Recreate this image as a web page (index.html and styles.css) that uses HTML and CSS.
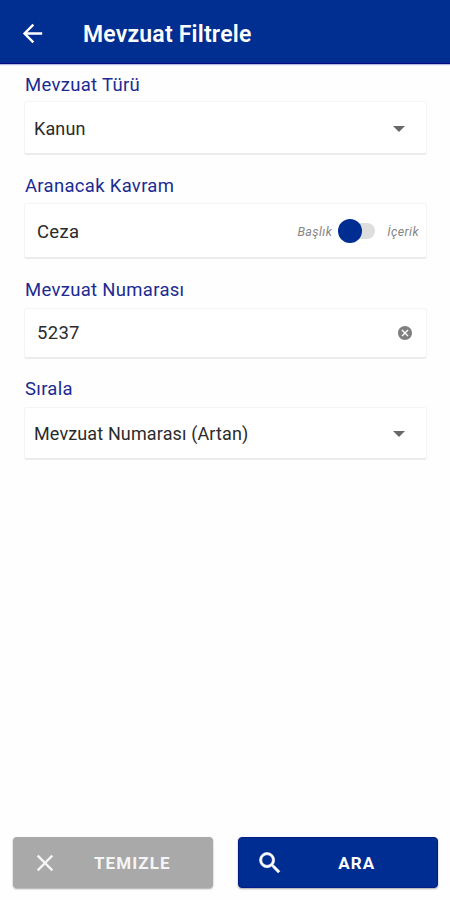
FILE: index.html
```html
<!DOCTYPE html>
<html lang="tr">
<head>
<meta charset="utf-8">
<title>Mevzuat Filtrele</title>
<link rel="stylesheet" href="styles.css">
</head>
<body>
<div class="screen">
  <header class="appbar">
    <svg class="back" viewBox="0 0 24 24"><path d="M20 11H7.83l5.59-5.59L12 4l-8 8 8 8 1.41-1.41L7.83 13H20v-2z"/></svg>
    <h1 class="title">Mevzuat Filtrele</h1>
  </header>
  <main class="form">
    <label class="label label-type">Mevzuat Türü</label>
    <div class="card card-type">
      <span class="value value-select">Kanun</span>
      <svg class="caret" viewBox="0 0 12 6"><path d="M0 0h12L6 6z"/></svg>
    </div>
    <label class="label label-term">Aranacak Kavram</label>
    <div class="card card-term">
      <span class="value value-term">Ceza</span>
      <span class="option">Başlık</span>
      <span class="switch"><span class="thumb"></span></span>
      <span class="option">İçerik</span>
    </div>
    <label class="label label-number">Mevzuat Numarası</label>
    <div class="card card-number">
      <span class="value">5237</span>
      <svg class="clear" viewBox="2 2 20 20"><path d="M12 2C6.47 2 2 6.47 2 12s4.47 10 10 10 10-4.47 10-10S17.53 2 12 2zm5 13.59L15.59 17 12 13.41 8.41 17 7 15.59 10.59 12 7 8.41 8.41 7 12 10.59 15.59 7 17 8.41 13.41 12 17 15.59z"/></svg>
    </div>
    <label class="label label-sort">Sırala</label>
    <div class="card card-sort">
      <span class="value value-select">Mevzuat Numarası (Artan)</span>
      <svg class="caret" viewBox="0 0 12 6"><path d="M0 0h12L6 6z"/></svg>
    </div>
  </main>
  <footer class="actions">
    <button class="button button-reset">
      <svg class="icon" viewBox="0 0 24 24"><path d="M19 6.41L17.59 5 12 10.59 6.41 5 5 6.41 10.59 12 5 17.59 6.41 19 12 13.41 17.59 19 19 17.59 13.41 12z"/></svg>
      <span class="caption">TEMIZLE</span>
    </button>
    <button class="button button-search">
      <svg class="icon icon-search" viewBox="0 0 24 24"><path d="M15.5 14h-.79l-.28-.27A6.47 6.47 0 0 0 16 9.5 6.5 6.5 0 1 0 9.5 16c1.61 0 3.09-.59 4.23-1.57l.27.28v.79l5 4.99L20.49 19l-4.99-5zm-6 0C7.01 14 5 11.99 5 9.5S7.01 5 9.5 5 14 7.01 14 9.5 11.99 14 9.5 14z"/></svg>
      <span class="caption">ARA</span>
    </button>
  </footer>
</div>
</body>
</html>
```
FILE: styles.css
```css
* { box-sizing: border-box; }
body { margin: 0; background: #fefefe; font-family: Roboto, sans-serif; }
svg { display: block; flex: none; }
.screen { width: 450px; height: 900px; display: flex; flex-direction: column; }
.appbar {
  height: 64px; flex: none; display: flex; align-items: center;
  padding: 3px 0 0 18px; background: #002f91; color: #fff;
  border-bottom: 1px solid #00087f; box-shadow: 0 1px 1px #b9bce0;
}
.back { width: 29px; height: 29px; fill: #fff; }
.title { margin: 3px 0 0 36px; font-size: 23px; font-weight: 600; letter-spacing: .2px; line-height: 30px; white-space: nowrap; }
.form { flex: 1; display: flex; flex-direction: column; padding: 0 23px 0 24px; }
.label { flex: none; color: #1c2b91; font-size: 18.5px; letter-spacing: .3px; line-height: 24px; padding-left: 1px; white-space: nowrap; }
.label-type { margin: 9px 0 4px; }
.label-term { margin: 19px 0 5px; }
.label-number { margin: 19px 0 6px; }
.label-sort { margin: 18px 0 6px; }
.card {
  flex: none; display: flex; align-items: center; background: #fff;
  border: 1px solid #f4f4f4; border-bottom: 2px solid #ececec; border-radius: 3px;
}
.card-type { height: 54px; padding: 2px 21px 0 9px; }
.card-term { height: 56px; padding: 1px 7px 0 12px; }
.card-number { height: 51px; padding: 0 14px 0 12px; }
.card-sort { height: 53px; padding: 1px 21px 0 9px; }
.value { margin-right: auto; color: #2b2b2b; font-size: 18.5px; line-height: 24px; letter-spacing: .3px; white-space: nowrap; }
.value-select { font-size: 18px; letter-spacing: .13px; }
.value-term { padding-top: 2px; }
.caret { width: 12px; height: 6px; fill: #686868; }
.option { color: #858585; font-size: 12.5px; font-style: italic; letter-spacing: .4px; white-space: nowrap; }
.switch { flex: none; width: 37px; height: 24px; margin: 0 12px 0 6px; display: flex; align-items: center; }
.switch::after { content: ""; width: 25px; height: 16px; margin-left: -12px; background: #dedede; border-radius: 8px; }
.thumb { flex: none; z-index: 1; width: 24px; height: 24px; border-radius: 50%; background: #002d91; }
.clear { width: 14px; height: 14px; fill: #808080; }
.actions { display: grid; grid-template-columns: 200.5px 200.5px; gap: 24.5px; padding: 0 12px 12px 12.5px; }
.button {
  height: 51px; border: 0; border-radius: 4px; padding: 0 0 0 18px;
  display: flex; align-items: center; color: #fff;
  font: 700 17px Roboto, sans-serif; letter-spacing: 1.1px;
  box-shadow: 0 1px 2px rgba(0, 0, 0, .35);
}
.button-reset { background: #a9a9a9; color: #f5f5f5; }
.button-search { background: #002d91; border: 1px solid #001c88; padding-left: 17px; }
.icon { width: 28px; height: 28px; fill: currentColor; }
.icon-search { stroke: currentColor; stroke-width: .5; }
.caption { flex: 1; text-align: center; padding-right: 7px; }
```
